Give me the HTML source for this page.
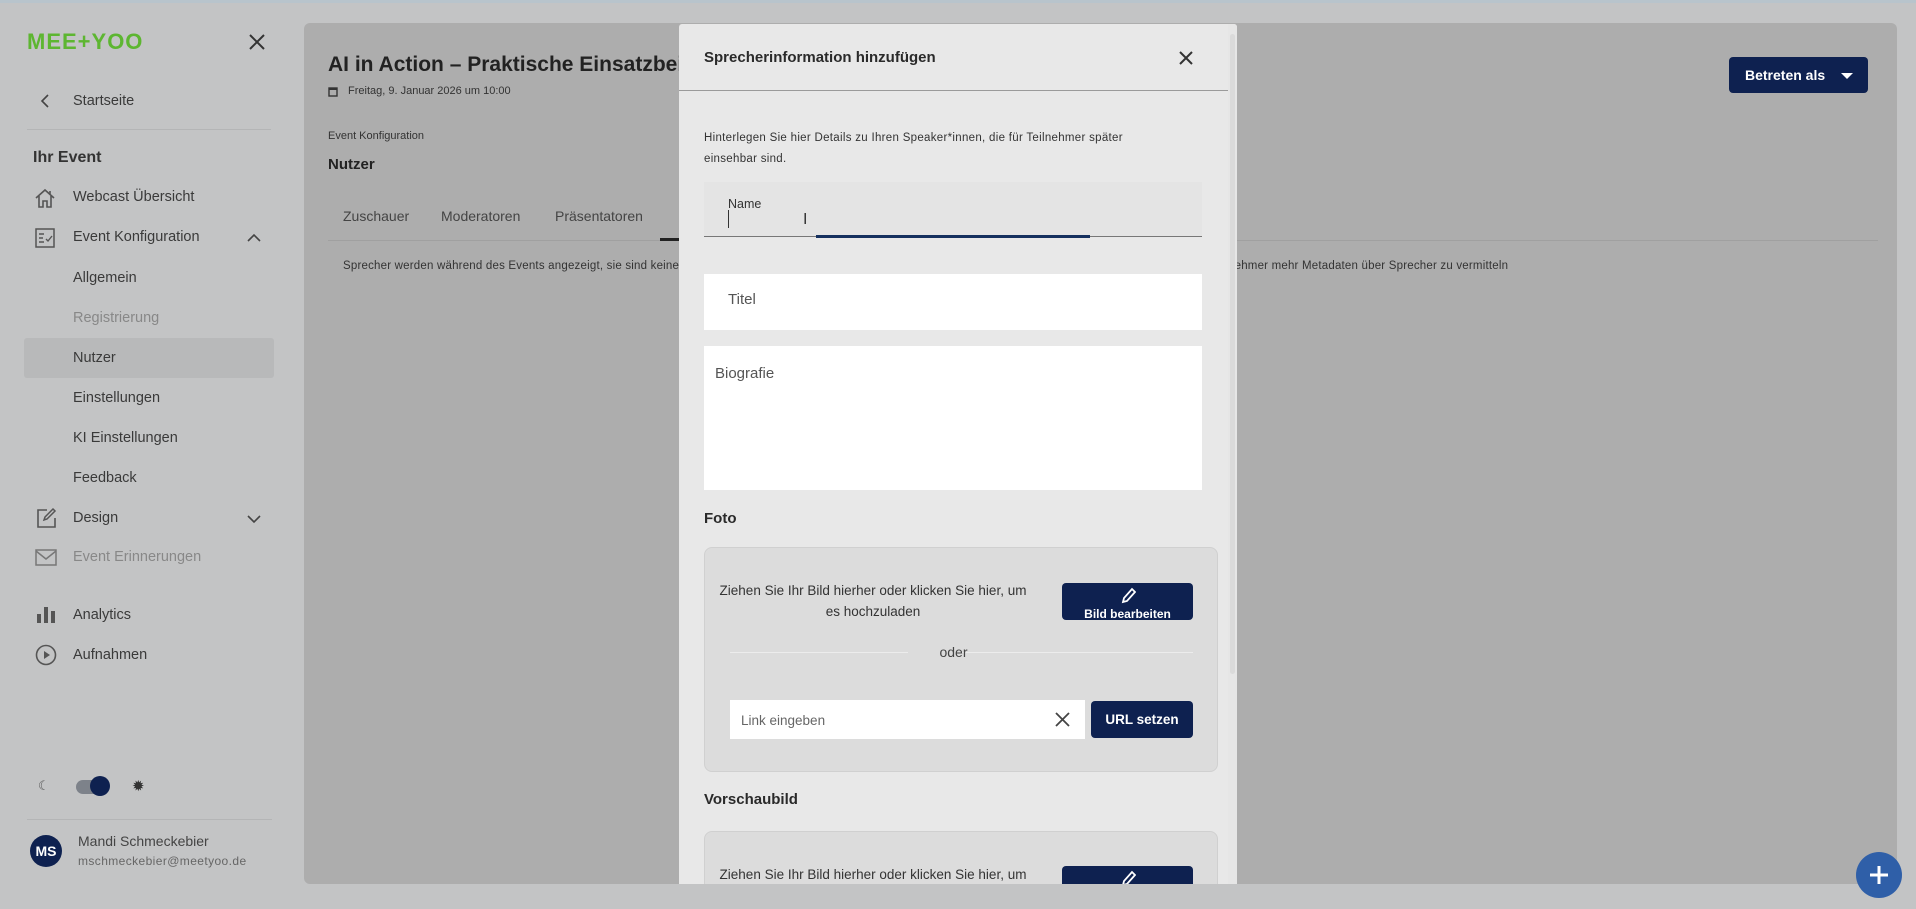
<!DOCTYPE html>
<html style="overflow:hidden"><head><meta charset="utf-8"><style>
*{box-sizing:border-box;margin:0;padding:0}
body{width:1916px;height:909px;overflow:hidden;background:#c3c4c5;font-family:"Liberation Sans",sans-serif;color:#333;position:relative}
.a{position:absolute;white-space:nowrap}
.si{font-size:14.5px;color:#3a3a3a}
.btn{background:#0e2150;color:#fff;border-radius:4px;font-weight:bold}
</style></head><body>
<div class="a" style="left:0;top:0;width:1916px;height:3px;background:#b8c4cc"></div>
<!-- sidebar -->
<div class="a" style="left:27px;top:29px;font-size:22px;font-weight:bold;color:#5db631;letter-spacing:1px">MEE+YOO</div>
<svg class="a" style="left:248px;top:33px" width="18" height="18" viewBox="0 0 18 18"><path d="M2 2L16 16M16 2L2 16" stroke="#333" stroke-width="2"/></svg>
<svg class="a" style="left:40px;top:94px" width="10" height="14"><path d="M8 1L2 7l6 6" fill="none" stroke="#444" stroke-width="1.6"/></svg>
<div class="a si" style="left:73px;top:93px">Startseite</div>
<div class="a" style="left:27px;top:129px;width:244px;height:1px;background:#b4b5b6"></div>
<div class="a" style="left:33px;top:149px;font-size:16px;font-weight:bold;color:#333">Ihr Event</div>
<svg class="a" style="left:34px;top:187px" width="22" height="22" viewBox="0 0 22 22"><path d="M2 11L11 3l9 8M5 9v11h4v-6h4v6h4V9M16 4v3" fill="none" stroke="#555" stroke-width="1.6"/></svg>
<div class="a si" style="left:73px;top:189px">Webcast Übersicht</div>
<svg class="a" style="left:35px;top:228px" width="20" height="20" viewBox="0 0 20 20"><rect x="1" y="1" width="18" height="18" fill="none" stroke="#555" stroke-width="1.5"/><path d="M4 6h5M4 10h4M4 14h5M11 11l2 2 4-5" fill="none" stroke="#555" stroke-width="1.4"/></svg>
<div class="a si" style="left:73px;top:229px">Event Konfiguration</div>
<svg class="a" style="left:247px;top:233px" width="14" height="10"><path d="M1 8l6-6 6 6" fill="none" stroke="#444" stroke-width="1.6"/></svg>
<div class="a si" style="left:73px;top:270px">Allgemein</div>
<div class="a si" style="left:73px;top:310px;color:#888">Registrierung</div>
<div class="a" style="left:24px;top:338px;width:250px;height:40px;background:#b8b9ba;border-radius:3px"></div>
<div class="a si" style="left:73px;top:350px">Nutzer</div>
<div class="a si" style="left:73px;top:390px">Einstellungen</div>
<div class="a si" style="left:73px;top:430px">KI Einstellungen</div>
<div class="a si" style="left:73px;top:470px">Feedback</div>
<svg class="a" style="left:35px;top:507px" width="22" height="22" viewBox="0 0 22 22"><path d="M12 3H3v17h17v-9" fill="none" stroke="#555" stroke-width="1.6"/><path d="M9 13l1-3 8-8 2 2-8 8z" fill="none" stroke="#555" stroke-width="1.5"/></svg>
<div class="a si" style="left:73px;top:510px">Design</div>
<svg class="a" style="left:247px;top:514px" width="14" height="10"><path d="M1 2l6 6 6-6" fill="none" stroke="#444" stroke-width="1.6"/></svg>
<svg class="a" style="left:35px;top:549px" width="22" height="18" viewBox="0 0 22 18"><rect x="1" y="1" width="20" height="15" fill="none" stroke="#777" stroke-width="1.5"/><path d="M1 2l10 8 10-8" fill="none" stroke="#777" stroke-width="1.5"/></svg>
<div class="a si" style="left:73px;top:549px;color:#888">Event Erinnerungen</div>
<svg class="a" style="left:36px;top:605px" width="20" height="18"><rect x="1" y="9" width="4" height="9" fill="#555"/><rect x="8" y="2" width="4" height="16" fill="#555"/><rect x="15" y="6" width="4" height="12" fill="#555"/></svg>
<div class="a si" style="left:73px;top:607px">Analytics</div>
<svg class="a" style="left:35px;top:644px" width="22" height="22"><circle cx="11" cy="11" r="9.5" fill="none" stroke="#555" stroke-width="1.6"/><path d="M9 7l6 4-6 4z" fill="#555"/></svg>
<div class="a si" style="left:73px;top:647px">Aufnahmen</div>
<div class="a" style="left:38px;top:778px;font-size:13px;color:#555">☾</div>
<div class="a" style="left:76px;top:780px;width:32px;height:14px;border-radius:7px;background:#7d828a"></div>
<div class="a" style="left:90px;top:776px;width:20px;height:20px;border-radius:50%;background:#0e2150"></div>
<div class="a" style="left:132px;top:777px;font-size:15px;color:#333">✹</div>
<div class="a" style="left:27px;top:819px;width:245px;height:1px;background:#b4b5b6"></div>
<div class="a" style="left:30px;top:835px;width:32px;height:32px;border-radius:50%;background:#0e2150;color:#fff;font-weight:bold;font-size:14px;text-align:center;line-height:32px">MS</div>
<div class="a" style="left:78px;top:833px;font-size:14px;color:#444">Mandi Schmeckebier</div>
<div class="a" style="left:78px;top:854px;font-size:12px;color:#666;letter-spacing:.4px">mschmeckebier@meetyoo.de</div>
<!-- main -->
<div class="a" style="left:304px;top:23px;width:1593px;height:861px;background:#adadad;border-radius:6px"></div>
<div class="a" style="left:328px;top:53px;font-size:21px;font-weight:bold;color:#222">AI in Action – Praktische Einsatzbeispiele</div>
<svg class="a" style="left:328px;top:86px" width="10" height="11"><rect x="1" y="2" width="8" height="8" fill="none" stroke="#333" stroke-width="1.4"/><rect x="1" y="2" width="8" height="2" fill="#333"/></svg>
<div class="a" style="left:348px;top:85px;font-size:11px;color:#333">Freitag, 9. Januar 2026 um 10:00</div>
<div class="a" style="left:328px;top:130px;font-size:11px;color:#333">Event Konfiguration</div>
<div class="a" style="left:328px;top:156px;font-size:15px;font-weight:bold;color:#222">Nutzer</div>
<div class="a" style="left:343px;top:208px;font-size:14px;color:#444">Zuschauer</div>
<div class="a" style="left:441px;top:208px;font-size:14px;color:#444">Moderatoren</div>
<div class="a" style="left:555px;top:208px;font-size:14px;color:#444">Präsentatoren</div>
<div class="a" style="left:328px;top:240px;width:1550px;height:1px;background:#a0a0a0"></div>
<div class="a" style="left:660px;top:238px;width:30px;height:3px;background:#222"></div>
<div class="a" style="left:343px;top:260px;font-size:11.5px;color:#333;letter-spacing:.2px">Sprecher werden während des Events angezeigt, sie sind keine Nutzer</div>
<div class="a" style="left:1228px;top:260px;font-size:11.5px;color:#333;letter-spacing:.2px">nehmer mehr Metadaten über Sprecher zu vermitteln</div>
<div class="a btn" style="left:1729px;top:57px;width:139px;height:36px;font-size:14px;line-height:36px;padding-left:16px">Betreten als <span style="display:inline-block;margin-left:12px;border-left:6px solid transparent;border-right:6px solid transparent;border-top:6px solid #fff;vertical-align:middle"></span></div>
<div class="a" style="left:1856px;top:852px;width:46px;height:46px;border-radius:50%;background:#2f5fa8"></div>
<svg class="a" style="left:1866px;top:862px" width="26" height="26" viewBox="0 0 26 26"><path d="M13 4v18M4 13h18" stroke="#fff" stroke-width="3"/></svg>
<!-- modal -->
<div class="a" style="left:679px;top:24px;width:558px;height:860px;background:#e8e8e8;border-radius:3px 3px 0 0;overflow:hidden">
 <div class="a" style="left:549px;top:0;width:9px;height:860px;background:#e6e6e6"></div>
 <div class="a" style="left:551px;top:10px;width:5px;height:640px;background:#dadada;border-radius:3px"></div>
 <div class="a" style="left:25px;top:25px;font-size:15px;font-weight:bold;color:#2a2a2a">Sprecherinformation hinzufügen</div>
 <svg class="a" style="left:499px;top:26px" width="16" height="16"><path d="M2 2l12 12M14 2L2 14" stroke="#333" stroke-width="2"/></svg>
 <div class="a" style="left:0;top:66px;width:549px;height:1px;background:#9a9a9a"></div>
 <div class="a" style="left:25px;top:104px;font-size:11.5px;color:#333;line-height:21px;letter-spacing:.3px">Hinterlegen Sie hier Details zu Ihren Speaker*innen, die für Teilnehmer später<br>einsehbar sind.</div>
 <div class="a" style="left:25px;top:158px;width:498px;height:55px;background:#e4e4e4;border-bottom:1px solid #777"></div>
 <div class="a" style="left:49px;top:173px;font-size:12.5px;color:#333">Name</div>
 <div class="a" style="left:49px;top:186px;width:1px;height:18px;background:#333"></div>
 <div class="a" style="left:124px;top:187px;font-size:16px;color:#333">I</div>
 <div class="a" style="left:137px;top:211px;width:274px;height:3px;background:#15305e"></div>
 <div class="a" style="left:25px;top:250px;width:498px;height:56px;background:#fff"></div>
 <div class="a" style="left:49px;top:267px;font-size:15px;color:#555">Titel</div>
 <div class="a" style="left:25px;top:322px;width:498px;height:144px;background:#fff"></div>
 <div class="a" style="left:36px;top:341px;font-size:15px;color:#555">Biografie</div>
 <div class="a" style="left:25px;top:486px;font-size:15px;font-weight:bold;color:#2a2a2a">Foto</div>
 <div class="a" style="left:25px;top:523px;width:514px;height:225px;background:#dcdcdc;border:1px solid #d0d0d0;border-radius:8px"></div>
 <div class="a" style="left:36px;top:556px;width:316px;text-align:center;white-space:normal;font-size:13.5px;color:#333;line-height:21px">Ziehen Sie Ihr Bild hierher oder klicken Sie hier, um es hochzuladen</div>
 <div class="a btn" style="left:383px;top:559px;width:131px;height:37px;overflow:hidden;text-align:center;font-size:12px"><svg style="display:block;margin:4px auto 2px" width="16" height="18" viewBox="0 0 16 18"><path d="M3 15l1-4 8-9 3 3-8 9z" fill="none" stroke="#fff" stroke-width="1.8"/></svg>Bild bearbeiten</div>
 <div class="a" style="left:51px;top:628px;width:178px;height:1px;background:#ececec"></div>
 <div class="a" style="left:283px;top:628px;width:231px;height:1px;background:#ececec"></div>
 <div class="a" style="left:0;top:620px;width:549px;text-align:center;font-size:14px;color:#444">oder</div>
 <div class="a" style="left:51px;top:676px;width:355px;height:39px;background:#fff"></div>
 <div class="a" style="left:62px;top:689px;font-size:13.5px;color:#666">Link eingeben</div>
 <svg class="a" style="left:376px;top:688px" width="15" height="15"><path d="M1 1l13 13M14 1L1 14" stroke="#444" stroke-width="1.8"/></svg>
 <div class="a btn" style="left:412px;top:677px;width:102px;height:37px;text-align:center;line-height:37px;font-size:13.5px">URL setzen</div>
 <div class="a" style="left:25px;top:767px;font-size:15px;font-weight:bold;color:#2a2a2a">Vorschaubild</div>
 <div class="a" style="left:25px;top:807px;width:514px;height:225px;background:#dcdcdc;border:1px solid #d0d0d0;border-radius:8px"></div>
 <div class="a" style="left:36px;top:840px;width:316px;text-align:center;white-space:normal;font-size:13.5px;color:#333;line-height:21px">Ziehen Sie Ihr Bild hierher oder klicken Sie hier, um</div>
 <div class="a btn" style="left:383px;top:842px;width:131px;height:37px;text-align:center"><svg style="display:block;margin:4px auto 0" width="16" height="18" viewBox="0 0 16 18"><path d="M3 15l1-4 8-9 3 3-8 9z" fill="none" stroke="#fff" stroke-width="1.8"/></svg></div>
</div>
</body></html>
